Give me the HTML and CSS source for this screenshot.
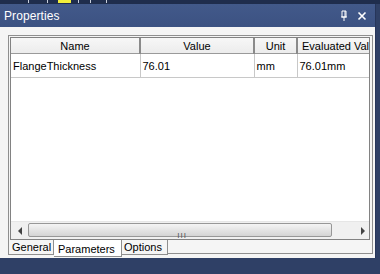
FILE: index.html
```html
<!DOCTYPE html>
<html lang="en">
<head>
  <meta charset="UTF-8" />
  <title>Properties</title>
  <link rel="stylesheet" href="styles.css">
</head>
<body>
  <div class="topstrip">
    <span class="tick" style="left:28px"></span>
    <span class="tick" style="left:47px"></span>
    <span class="tick yellow" style="left:58px"></span>
    <span class="tick" style="left:78px"></span>
    <span class="tick" style="left:90px"></span>
    <span class="tick" style="left:106px"></span>
  </div>
  <div class="window">
    <div class="titlebar">
      <span class="title">Properties</span>
      <div class="tools">
        <svg width="10" height="11" viewBox="0 0 10 11">
          <path d="M3 1h4v6H3z M2 7h6 M5 7v4 M6 1v6" fill="none" stroke="#fff" stroke-width="1"/>
        </svg>
        <svg width="10" height="10" viewBox="0 0 10 10">
          <path d="M1.5 1.5l7 7 M8.5 1.5l-7 7" stroke="#fff" stroke-width="1.6"/>
        </svg>
      </div>
    </div>
    <div class="panel">
      <div class="tabframe">
        <div class="listbox">
          <div class="grid">
            <table class="records">
              <thead>
                <tr><th class="c1">Name</th><th class="c2">Value</th><th class="c3">Unit</th><th class="c4">Evaluated Value</th></tr>
              </thead>
              <tbody>
                <tr><td>FlangeThickness</td><td>76.01</td><td>mm</td><td>76.01mm</td></tr>
              </tbody>
            </table>
          </div>
          <div class="hscroll">
            <div class="arrow left"></div>
            <div class="track">
              <div class="thumb"><span class="grip">III</span></div>
            </div>
            <div class="arrow right"></div>
          </div>
        </div>
      </div>
      <div class="tabs">
        <div class="tab first">General</div>
        <div class="tab active">Parameters</div>
        <div class="tab last">Options</div>
        <div class="tabrest"></div>
      </div>
    </div>
  </div>
</body>
</html>
```

FILE: styles.css
```css
body {
  margin: 0;
  width: 380px;
  height: 274px;
  overflow: hidden;
  background: #2f4066;
  font-family: 'Liberation Sans', Arial, sans-serif;
}
.topstrip {
  position: relative;
  height: 4px;
  background: #1f2d4d;
}
.tick {
  position: absolute;
  top: 0;
  width: 1px;
  height: 3px;
  background: #c8cfdc;
}
.tick.yellow {
  width: 13px;
  background: #f2ee3a;
}
.window {
  margin-right: 4px;
  border-right: 1px solid #26355a;
}
.titlebar {
  height: 23px;
  background: linear-gradient(#42598a, #3c5282);
  display: flex;
  align-items: center;
  justify-content: space-between;
  padding: 0 8px 0 4px;
  color: #fff;
}
.title {
  font-size: 12px;
  letter-spacing: 0.1px;
}
.tools {
  display: flex;
  gap: 8px;
  align-items: center;
}
.panel {
  background: #f5f5f5;
  height: 231px;
  padding: 8px 2px 0 8px;
  box-sizing: border-box;
}
.tabframe {
  border: 1px solid #8f8f8f;
  border-bottom: none;
  background: #f5f5f5;
  padding: 1px 2px 1px 1px;
  height: 205px;
  box-sizing: border-box;
}
.listbox {
  border: 1px solid #828282;
  background: #fff;
  height: 203px;
  box-sizing: border-box;
  display: flex;
  flex-direction: column;
}
.grid {
  flex: 1;
  overflow: hidden;
}
.records {
  border-collapse: collapse;
  table-layout: fixed;
  width: 400px;
  font-size: 11px;
  color: #000;
}
.records .c1 { width: 128px; }
.records .c2 { width: 112px; }
.records .c3 { width: 41px; }
.records .c4 { width: 119px; }
.records th {
  font-weight: normal;
  background: linear-gradient(#f7f7f7, #ececec);
  border-bottom: 1px solid #9a9a9a;
  border-right: 2px solid #8a8a8a;
  height: 15px;
  padding: 0;
  text-align: center;
}
.records th.c4 {
  text-align: left;
  padding-left: 4px;
}
.records td {
  border-right: 1px solid #c8c8c8;
  border-bottom: 1px solid #c8c8c8;
  height: 22px;
  padding: 1px 0 0 2px;
  white-space: nowrap;
}
.hscroll {
  height: 17px;
  display: flex;
  background: #f0f0f0;
  border-top: 1px solid #e6e6e6;
}
.arrow {
  width: 17px;
  position: relative;
}
.arrow.left::after, .arrow.right::after {
  content: '';
  position: absolute;
  top: 5px;
  border: 4px solid transparent;
}
.arrow.left::after {
  left: 3px;
  border-right-color: #444;
}
.arrow.right::after {
  left: 9px;
  border-left-color: #444;
}
.track {
  flex: 1;
  padding: 1px 0;
}
.thumb {
  width: 304px;
  height: 14px;
  border: 1px solid #979797;
  border-radius: 2px;
  background: linear-gradient(#f4f4f4, #d4d4d4);
  box-sizing: border-box;
  text-align: right;
}
.grip {
  font-size: 8px;
  color: #555;
  letter-spacing: 1px;
  margin-right: 144px;
  line-height: 12px;
}
.tabs {
  display: flex;
  align-items: flex-start;
  height: 18px;
  font-size: 11px;
}
.tab {
  border: 1px solid #8f8f8f;
  border-top: none;
  background: #f5f5f5;
  height: 14px;
  line-height: 14px;
  box-sizing: content-box;
}
.tab.first {
  width: 41px;
  padding-left: 3px;
}
.tab.active {
  background: #fff;
  height: 16px;
  line-height: 19px;
  padding-left: 4px;
  border-left: none;
  width: 63px;
}
.tab.last {
  width: 43px;
  padding-left: 2px;
  border-left: none;
}
.tabrest {
  flex: 1;
  height: 13px;
  border-bottom: 1px solid #8f8f8f;
  border-right: 1px solid #8f8f8f;
}
```
